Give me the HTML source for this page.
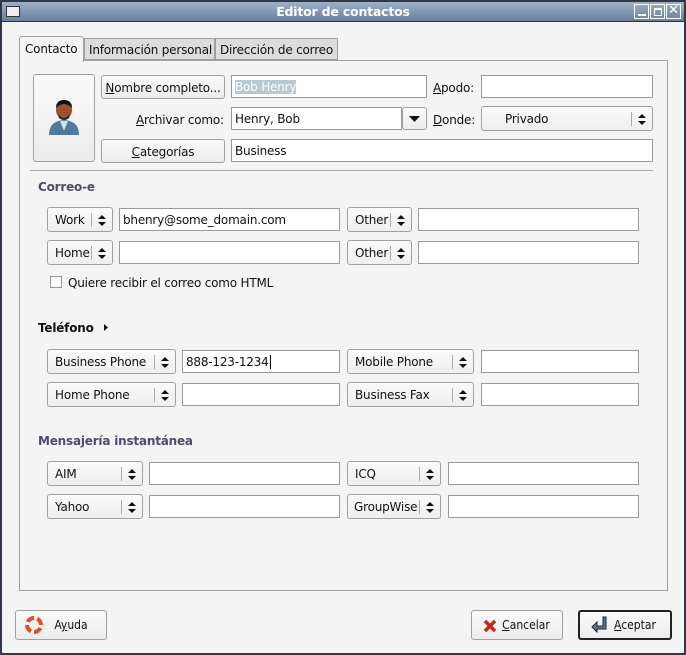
<!DOCTYPE html>
<html><head><meta charset="utf-8"><style>
*{box-sizing:border-box;margin:0;padding:0}
body{width:686px;height:655px;overflow:hidden;background:#3b4556;font-family:"DejaVu Sans","Liberation Sans",sans-serif;font-size:12px;letter-spacing:-0.2px;color:#111;position:relative;white-space:nowrap}
.win{position:absolute;left:0;top:0;width:686px;height:655px;border:2px solid #303848;border-radius:3px;background:#f4f4f4}
.title{position:absolute;left:0;top:0;width:682px;height:20px;background:linear-gradient(#9eb0c8,#6a7f9e);color:#fff;font-weight:bold;font-size:12.5px;text-align:center;line-height:20px;border-bottom:1px solid #2a3140}
.a{position:absolute}
.btn{position:absolute;border:1px solid #a0a0a0;border-radius:3px;background:linear-gradient(#fafafa,#ececec);text-align:center;line-height:24px}
.inp{position:absolute;border:1px solid #9a9a9a;background:#fff;line-height:22px;padding-left:3px;height:23px;overflow:hidden}
.cmb{position:absolute;border:1px solid #a0a0a0;border-radius:3px;background:linear-gradient(#fafafa,#efefef);height:25px;line-height:25px;padding-left:7px}
.cmb:after{content:"";position:absolute;right:20px;top:5px;height:14px;border-left:1px solid #aaa}
.cmb svg{position:absolute;right:6px;top:7px}
.hd{position:absolute;font-weight:bold;color:#4c4c6c}
.bb{font-family:"DejaVu Sans Condensed","DejaVu Sans",sans-serif;letter-spacing:0}
u{text-decoration:underline}
</style></head><body>
<div class="win">
<div class="title">Editor de contactos
<div class="a" style="left:4px;top:4px;width:14px;height:11px;background:#eee;border:1px solid #333"></div>
<div class="a" style="left:632px;top:2px;width:15px;height:15px;border:1px solid #fff"><div class="a" style="left:3px;top:9px;width:8px;height:2px;background:#fff"></div></div>
<div class="a" style="left:648px;top:2px;width:15px;height:15px;border:1px solid #fff"><div class="a" style="left:3px;top:3px;width:8px;height:8px;border:1px solid #fff;border-top-width:2px"></div></div>
<div class="a" style="left:664px;top:2px;width:15px;height:15px;border:1px solid #fff;line-height:12px;font-size:13px">✕</div>
</div>
</div>
<div class="a" style="left:19px;top:36px;width:65px;height:26px;border:1px solid #a0a0a0;border-bottom:none;background:#f4f4f4;border-radius:3px 3px 0 0;padding:5px 0 0 5px;z-index:2">Contacto</div>
<div class="a" style="left:84px;top:38px;width:131px;height:22px;border:1px solid #a0a0a0;background:#dcdcdc;padding:4px 0 0 4px">Información personal</div>
<div class="a" style="left:215px;top:38px;width:123px;height:22px;border:1px solid #a0a0a0;background:#dcdcdc;padding:4px 0 0 4px">Dirección de correo</div>
<div class="a" style="left:19px;top:60px;width:649px;height:531px;border:1px solid #a0a0a0"></div>

<div class="btn" style="left:33px;top:74px;width:62px;height:88px"><svg class="a" style="left:12px;top:22px" width="36" height="40" viewBox="0 0 36 40"><path d="M3 38 Q3 24 18 23 Q33 24 33 38 Z" fill="#4f7aa0"/><path d="M14 24 L18 34 L22 24Z" fill="#cfe0ee"/><ellipse cx="18" cy="13" rx="8" ry="9" fill="#a0522d"/><path d="M10 11 Q10 3 18 3 Q26 3 26 11 Q22 7 18 7 Q14 7 10 11Z" fill="#111"/><path d="M12 17 Q18 25 24 17 L23 21 Q18 25 13 21Z" fill="#222"/></svg></div>
<div class="btn" style="left:101px;top:75px;width:124px;height:24px"><u>N</u>ombre completo...</div>
<div class="inp" style="left:231px;top:75px;width:196px"><span style="background:#b7c9d3;color:#fff">Bob Henry</span></div>
<div class="a" style="left:433px;top:81px"><u>A</u>podo:</div>
<div class="inp" style="left:481px;top:75px;width:172px"></div>
<div class="a" style="left:136px;top:113px"><u>A</u>rchivar como:</div>
<div class="inp" style="left:231px;top:107px;width:171px">Henry, Bob</div>
<div class="btn" style="left:402px;top:107px;width:25px;height:23px"><svg class="a" style="left:6px;top:8px" width="11" height="7"><path d="M0 0H11L5.5 6Z" fill="#111"/></svg></div>
<div class="a" style="left:433px;top:113px"><u>D</u>onde:</div>
<div class="cmb" style="left:481px;top:106px;width:172px;padding-left:23px">Privado<svg width="8" height="11"><path d="M0 4L4 0L8 4ZM0 7L4 11L8 7Z" fill="#111"/></svg></div>
<div class="btn" style="left:101px;top:139px;width:124px;height:24px"><u>C</u>ategorías</div>
<div class="inp" style="left:231px;top:139px;width:422px">Business</div>
<div class="a" style="left:30px;top:170px;width:623px;height:1px;background:#a8a8a8"></div>

<div class="hd" style="left:38px;top:180px">Correo-e</div>
<div class="cmb" style="left:47px;top:207px;width:66px">Work<svg width="8" height="11"><path d="M0 4L4 0L8 4ZM0 7L4 11L8 7Z" fill="#111"/></svg></div>
<div class="inp" style="left:119px;top:208px;width:221px">bhenry@some_domain.com</div>
<div class="cmb" style="left:347px;top:207px;width:65px">Other<svg width="8" height="11"><path d="M0 4L4 0L8 4ZM0 7L4 11L8 7Z" fill="#111"/></svg></div>
<div class="inp" style="left:418px;top:208px;width:221px"></div>
<div class="cmb" style="left:47px;top:240px;width:66px">Home<svg width="8" height="11"><path d="M0 4L4 0L8 4ZM0 7L4 11L8 7Z" fill="#111"/></svg></div>
<div class="inp" style="left:119px;top:241px;width:221px"></div>
<div class="cmb" style="left:347px;top:240px;width:65px">Other<svg width="8" height="11"><path d="M0 4L4 0L8 4ZM0 7L4 11L8 7Z" fill="#111"/></svg></div>
<div class="inp" style="left:418px;top:241px;width:221px"></div>
<div class="a" style="left:50px;top:276px;width:12px;height:12px;border:1px solid #999;background:#fafafa"></div>
<div class="a" style="left:68px;top:276px">Quiere recibir el correo como HTML</div>

<div class="a" style="left:38px;top:321px;font-weight:bold">Teléfono</div>
<svg class="a" style="left:104px;top:324px" width="4" height="7"><path d="M0 0L4 3.5L0 7Z" fill="#111"/></svg>
<div class="cmb" style="left:47px;top:349px;width:129px">Business Phone<svg width="8" height="11"><path d="M0 4L4 0L8 4ZM0 7L4 11L8 7Z" fill="#111"/></svg></div>
<div class="inp" style="left:182px;top:350px;width:158px">888-123-1234<span style="border-left:1px solid #000;margin-left:1px"></span></div>
<div class="cmb" style="left:347px;top:349px;width:127px">Mobile Phone<svg width="8" height="11"><path d="M0 4L4 0L8 4ZM0 7L4 11L8 7Z" fill="#111"/></svg></div>
<div class="inp" style="left:481px;top:350px;width:158px"></div>
<div class="cmb" style="left:47px;top:382px;width:129px">Home Phone<svg width="8" height="11"><path d="M0 4L4 0L8 4ZM0 7L4 11L8 7Z" fill="#111"/></svg></div>
<div class="inp" style="left:182px;top:383px;width:158px"></div>
<div class="cmb" style="left:347px;top:382px;width:127px">Business Fax<svg width="8" height="11"><path d="M0 4L4 0L8 4ZM0 7L4 11L8 7Z" fill="#111"/></svg></div>
<div class="inp" style="left:481px;top:383px;width:158px"></div>

<div class="hd" style="left:38px;top:434px">Mensajería instantánea</div>
<div class="cmb" style="left:47px;top:461px;width:96px">AIM<svg width="8" height="11"><path d="M0 4L4 0L8 4ZM0 7L4 11L8 7Z" fill="#111"/></svg></div>
<div class="inp" style="left:149px;top:462px;width:191px"></div>
<div class="cmb" style="left:347px;top:461px;width:94px">ICQ<svg width="8" height="11"><path d="M0 4L4 0L8 4ZM0 7L4 11L8 7Z" fill="#111"/></svg></div>
<div class="inp" style="left:448px;top:462px;width:191px"></div>
<div class="cmb" style="left:47px;top:494px;width:96px">Yahoo<svg width="8" height="11"><path d="M0 4L4 0L8 4ZM0 7L4 11L8 7Z" fill="#111"/></svg></div>
<div class="inp" style="left:149px;top:495px;width:191px"></div>
<div class="cmb" style="left:347px;top:494px;width:94px;padding-left:6px">GroupWise<svg width="8" height="11"><path d="M0 4L4 0L8 4ZM0 7L4 11L8 7Z" fill="#111"/></svg></div>
<div class="inp" style="left:448px;top:495px;width:191px"></div>

<div class="btn bb" style="left:15px;top:610px;width:92px;height:30px;line-height:28px;padding-left:20px"><svg class="a" style="left:9px;top:5px" width="18" height="18"><circle cx="9" cy="9" r="7" fill="none" stroke="#e0502a" stroke-width="4"/><circle cx="9" cy="9" r="7" fill="none" stroke="#fff" stroke-width="4" stroke-dasharray="3 8"/></svg>A<u>y</u>uda</div>
<div class="btn bb" style="left:471px;top:610px;width:92px;height:30px;line-height:28px;padding-left:18px"><svg class="a" style="left:11px;top:8px" width="14" height="14"><path d="M2 2L12 12M12 2L2 12" stroke="#c0281a" stroke-width="3.5"/></svg><u>C</u>ancelar</div>
<div class="btn bb" style="left:578px;top:610px;width:94px;height:30px;line-height:26px;border:2px solid #222;padding-left:20px"><svg class="a" style="left:11px;top:4px" width="20" height="18"><path d="M12 1V10H6V6L1 11L6 16V13H15V1Z" fill="#5a7898" stroke="#223" stroke-width="1"/></svg><u>A</u>ceptar</div>
</body></html>
